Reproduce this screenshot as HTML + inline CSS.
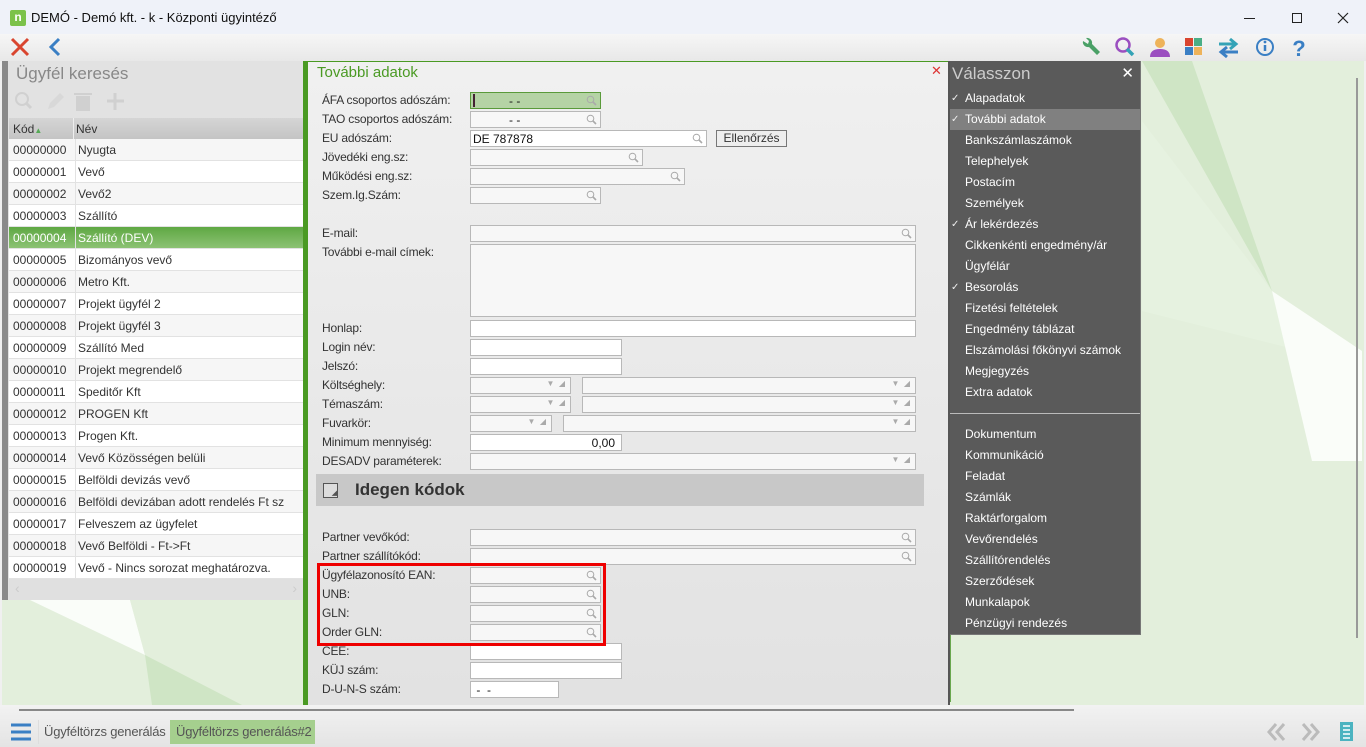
<!DOCTYPE html><html><head><meta charset="utf-8"><style>
*{box-sizing:border-box;margin:0;padding:0}
body{width:1366px;height:747px;overflow:hidden;font-family:"Liberation Sans",sans-serif;font-size:12px;color:#333;background:#f0f0f0;position:relative}
.a{position:absolute}
.lbl{position:absolute;left:322px;font-size:12px;color:#333;letter-spacing:-0.2px}
.in{position:absolute;background:#fff;border:1px solid #b8b8b8;height:17px}
.in.g{background:#f7f7f7}
.mag{position:absolute;right:3px;top:2px;width:11px;height:11px}
.dd{position:absolute;right:5px;top:1px;font-size:8px;color:#aaa}
.menu div{height:21px;line-height:21px;padding-left:15px;color:#fff;font-size:12px;position:relative}
.menu .ck:before{content:"✓";position:absolute;left:1px;font-size:10px;color:#eee}
.row{position:absolute;left:9px;width:294px;height:22px;line-height:22px;border-bottom:1px solid #e2e2e2}
.row span{position:absolute;left:4px}.row b{font-weight:normal;position:absolute;left:66px;border-left:1px solid #e2e2e2;padding-left:2px;height:22px}
</style></head><body>
<div class="a" style="left:0;top:0;width:1366px;height:34px;background:#eff2f9"></div>
<div class="a" style="left:10px;top:10px;width:16px;height:16px;background:#7cc24a;border-radius:2px;color:#fff;font-weight:bold;font-size:12px;line-height:15px;text-align:center">n</div>
<div class="a" style="left:31px;top:10px;font-size:13px;color:#111">DEMÓ - Demó kft. - k - Központi ügyintéző</div>
<div class="a" style="left:1244px;top:18px;width:11px;height:1px;background:#222"></div>
<div class="a" style="left:1292px;top:13px;width:10px;height:10px;border:1px solid #222"></div>
<svg class="a" style="left:1337px;top:12px" width="12" height="12"><path d="M1 1L11 11M11 1L1 11" stroke="#222" stroke-width="1.2"/></svg>
<div class="a" style="left:0;top:34px;width:1366px;height:27px;background:linear-gradient(#f6f6f6,#e8e8e8)"></div>
<svg class="a" style="left:9px;top:37px" width="22" height="20"><path d="M3 2L19 18M19 2L3 18" stroke="#d9452f" stroke-width="3"/></svg>
<svg class="a" style="left:47px;top:37px" width="16" height="20"><path d="M12 2L4 10L12 18" stroke="#3a7fc4" stroke-width="3" fill="none"/></svg>
<svg class="a" style="left:1075px;top:34px" width="240" height="27">
<path d="M8 7a5 5 0 0 0 6 6l8 8l3-3l-8-8a5 5 0 0 0-6-6l3 3l-1 3z" fill="#4aa066"/>
<circle cx="48" cy="11" r="6.5" stroke="#9b4fc0" stroke-width="2.5" fill="none"/><path d="M52 15l6 6" stroke="#34a3b6" stroke-width="3.5"/>
<circle cx="85" cy="9" r="5" fill="#eeb35a"/><path d="M75 23q0-8 10-8t10 8z" fill="#9b4fc0"/>
<rect x="110" y="4" width="8" height="8" fill="#d9452f"/><rect x="119" y="4" width="8" height="8" fill="#4aae86"/><rect x="110" y="13" width="8" height="8" fill="#3a7fc4"/><rect x="119" y="13" width="8" height="8" fill="#eeb35a"/>
<path d="M144 10h16M155 5l6 5l-6 5" stroke="#34a3b6" stroke-width="3" fill="none"/><path d="M163 18h-16M152 13l-6 5l6 5" stroke="#3a7fc4" stroke-width="3" fill="none"/>
<circle cx="190" cy="13" r="8" stroke="#3a7fc4" stroke-width="2" fill="none"/><path d="M190 11v6" stroke="#3a7fc4" stroke-width="2.5"/><circle cx="190" cy="8" r="1.4" fill="#3a7fc4"/>
<text x="224" y="22" font-family="Liberation Sans" font-weight="bold" font-size="22" fill="#3a7fc4" text-anchor="middle">?</text>
</svg>
<div class="a" style="left:2px;top:61px;width:1362px;height:644px;background:#e3efdc;overflow:hidden">
<svg width="1362" height="644"><polygon points="28,539 128,539 143,594" fill="#fafdf9"/><polygon points="128,539 300,539 300,644 240,644 143,594" fill="#e3efdc"/><polygon points="143,594 240,644 150,644" fill="#cfe5c5"/><polygon points="1140,0 1190,0 1270,230" fill="#cfe5c5"/><polygon points="1140,60 1270,230 1300,290 1140,250" fill="#e6f2e0"/><polygon points="1270,230 1360,290 1360,400 1310,400" fill="#fafdf9"/></svg></div>
<div class="a" style="left:1356px;top:78px;width:2px;height:560px;background:#999"></div>
<div class="a" style="left:2px;top:61px;width:6px;height:539px;background:#8a8a8a"></div>
<div class="a" style="left:8px;top:61px;width:295px;height:539px;background:#e2e2e2"></div>
<div class="a" style="left:16px;top:64px;font-size:17px;color:#888">Ügyfél keresés</div>
<svg class="a" style="left:12px;top:90px" width="115" height="22" opacity=".45"><circle cx="10" cy="9" r="6" stroke="#bbb" stroke-width="2" fill="none"/><path d="M14 13l5 5" stroke="#bbb" stroke-width="3"/><path d="M36 19l2-6l10-10l4 4l-10 10z" fill="#ccc"/><rect x="64" y="6" width="14" height="15" fill="#bbb"/><rect x="62" y="3" width="18" height="2" fill="#bbb"/><path d="M103 3v17M95 11h17" stroke="#bbb" stroke-width="3"/></svg>
<div class="a" style="left:9px;top:118px;width:294px;height:21px;background:linear-gradient(#d5d5d5,#c4c4c4)"></div>
<div class="a" style="left:13px;top:122px;font-size:12px;color:#333">Kód<span style="color:#5a5;font-size:8px">▲</span></div>
<div class="a" style="left:73px;top:118px;width:1px;height:21px;background:#eee"></div>
<div class="a" style="left:76px;top:122px">Név</div>
<div id="rows"></div>
<div class="a" style="left:9px;top:579px;width:294px;height:21px;background:#e0e0e0;color:#ccc;font-size:14px"><span style="position:absolute;left:6px;top:1px">‹</span><span style="position:absolute;right:6px;top:1px">›</span></div>
<div class="a" style="left:303px;top:61px;width:5px;height:644px;background:#4a9a23"></div>
<div class="a" style="left:308px;top:61px;width:641px;height:644px;background:linear-gradient(#f0f0f0,#e2e2e2);border-top:1px solid #4a9a23"></div>
<div class="a" style="left:948px;top:61px;width:2px;height:644px;background:#555"></div>
<div class="a" style="left:317px;top:64px;font-size:15px;color:#4a9a23">További adatok</div>
<div class="a" style="left:931px;top:63px;font-size:13px;color:#d33">✕</div>
<div id="form"></div>
<div class="a" style="left:316px;top:474px;width:608px;height:32px;background:#c8c8c8"></div>
<div class="a" style="left:323px;top:483px;width:15px;height:15px;border:1px solid #555;background:#ddd;font-size:7px;color:#555;text-align:right;line-height:19px">◢</div>
<div class="a" style="left:355px;top:480px;font-size:17px;font-weight:bold;color:#333">Idegen kódok</div>
<div class="a" style="left:716px;top:130px;width:71px;height:17px;border:1px solid #777;background:#eee;font-size:12px;text-align:center;line-height:15px">Ellenőrzés</div>
<div class="a" style="left:317px;top:563px;width:289px;height:83px;border:3px solid #e00"></div>
<div class="a" style="left:950px;top:61px;width:1px;height:641px;background:#6aa84f"></div>
<div class="a menu" style="left:950px;top:61px;width:191px;height:574px;background:#5a5a5a;border-right:1px solid #777;border-bottom:1px solid #777">
<div style="height:27px;line-height:25px;font-size:17px;color:#ccc;padding-left:2px">Válasszon<span style="position:absolute;right:6px;top:0;color:#fff;font-size:15px">✕</span></div>
<div class="ck">Alapadatok</div><div class="ck" style="background:#808080">További adatok</div><div>Bankszámlaszámok</div><div>Telephelyek</div><div>Postacím</div><div>Személyek</div><div class="ck">Ár lekérdezés</div><div>Cikkenkénti engedmény/ár</div><div>Ügyfélár</div><div class="ck">Besorolás</div><div>Fizetési feltételek</div><div>Engedmény táblázat</div><div>Elszámolási főkönyvi számok</div><div>Megjegyzés</div><div>Extra adatok</div>
<div style="height:21px;position:relative"><span style="position:absolute;left:0;right:0;top:10px;height:1px;background:#bbb"></span></div>
<div>Dokumentum</div><div>Kommunikáció</div><div>Feladat</div><div>Számlák</div><div>Raktárforgalom</div><div>Vevőrendelés</div><div>Szállítórendelés</div><div>Szerződések</div><div>Munkalapok</div><div>Pénzügyi rendezés</div>
</div>
<div class="a" style="left:0;top:705px;width:1366px;height:42px;background:linear-gradient(#f2f2f2,#e4e4e4)"></div>
<div class="a" style="left:19px;top:709px;width:1055px;height:2px;background:#888"></div>
<svg class="a" style="left:10px;top:722px" width="22" height="20"><path d="M1 3h20M1 10h20M1 17h20" stroke="#3a7fc4" stroke-width="3"/></svg>
<div class="a" style="left:38px;top:720px;width:132px;height:24px;border-left:1px solid #ddd"></div>
<div class="a" style="left:44px;top:724px;font-size:13px;color:#555;letter-spacing:-0.2px">Ügyféltörzs generálás</div>
<div class="a" style="left:170px;top:720px;width:145px;height:24px;background:#a5cf8e"></div>
<div class="a" style="left:176px;top:724px;font-size:13px;color:#555;letter-spacing:-0.2px">Ügyféltörzs generálás#2</div>
<svg class="a" style="left:1266px;top:722px" width="70" height="20"><path d="M10 2L3 10L10 18M18 2L11 10L18 18" stroke="#bbb" stroke-width="3" fill="none"/><path d="M37 2L44 10L37 18M45 2L52 10L45 18" stroke="#bbb" stroke-width="3" fill="none"/></svg>
<svg class="a" style="left:1339px;top:721px" width="16" height="21"><rect x="1" y="1" width="13" height="19" fill="#4bb3c0"/><path d="M4 5h7M4 9h7M4 13h7M4 17h7" stroke="#fff" stroke-width="1.5"/></svg>
<script>
var R=[["00000000","Nyugta"],["00000001","Vevő"],["00000002","Vevő2"],["00000003","Szállító"],["00000004","Szállító (DEV)"],["00000005","Bizományos vevő"],["00000006","Metro Kft."],["00000007","Projekt  ügyfél 2"],["00000008","Projekt  ügyfél 3"],["00000009","Szállító Med"],["00000010","Projekt megrendelő"],["00000011","Speditőr Kft"],["00000012","PROGEN Kft"],["00000013","Progen Kft."],["00000014","Vevő Közösségen belüli"],["00000015","Belföldi devizás vevő"],["00000016","Belföldi devizában adott rendelés Ft sz"],["00000017","Felveszem az ügyfelet"],["00000018","Vevő Belföldi - Ft->Ft"],["00000019","Vevő - Nincs sorozat meghatározva."]];
var h="";R.forEach(function(r,i){var bg=i==4?"linear-gradient(#5fa843,#8cc274)":(i%2?"#fff":"#f6f6f6");var c=i==4?"#fff":"#333";h+='<div class="row" style="top:'+(139+i*22)+'px;background:'+bg+';color:'+c+'"><span>'+r[0]+'</span><b>'+r[1]+'</b></div>'});document.getElementById("rows").innerHTML=h;
var mag='<svg class="mag" viewBox="0 0 11 11"><circle cx="4.5" cy="4.5" r="3.3" stroke="#aaa" fill="none"/><path d="M7 7l3 3" stroke="#aaa" stroke-width="1.6"/></svg>';
var F=[["ÁFA csoportos adószám:",100,131,"m","- -","s"],["TAO csoportos adószám:",119,131,"m","- -"],["EU adószám:",138,237,"m","DE 787878"],["Jövedéki eng.sz:",157,173,"m"],["Működési eng.sz:",176,215,"m"],["Szem.Ig.Szám:",195,131,"m"],["E-mail:",233,446,"m"],["További e-mail címek:",252,446,"t"],["Honlap:",328,446],["Login név:",347,152],["Jelszó:",366,152],["Költséghely:",385,],["Témaszám:",404],["Fuvarkör:",423],["Minimum mennyiség:",442,152,"n","0,00"],["DESADV paraméterek:",461,446,"d"],["Partner vevőkód:",537,446,"m"],["Partner szállítókód:",556,446,"m"],["Ügyfélazonosító EAN:",575,131,"m"],["UNB:",594,131,"m"],["GLN:",613,131,"m"],["Order GLN:",632,131,"m"],["CEE:",651,152],["KÜJ szám:",670,152],["D-U-N-S szám:",689,89,"","&nbsp;-&nbsp;&nbsp;-"]];
var f="";F.forEach(function(r){var y=r[1];f+='<div class="lbl" style="top:'+(y-7)+'px">'+r[0]+'</div>';
var dd='<span class="dd">▼ &nbsp;◢</span>';
if(!r[2]){var w1=r[0]=="Fuvarkör:"?82:101;f+='<div class="in g" style="left:470px;top:'+(y-8)+'px;width:'+w1+'px">'+dd+'</div><div class="in g" style="left:'+(470+w1+11)+'px;top:'+(y-8)+'px;width:'+(446-w1-11)+'px">'+dd+'</div>';return}
var st=r[5]=="s"?"background:#b5d3a5;border-color:#5a9a3a;":"";var hh=r[3]=="t"?73:17;var yy=y-8;
var g=(r[3]=="m"||r[3]=="d"||r[3]=="t")&&!r[5]&&r[0]!="EU adószám:"?" g":"";
var inner=r[3]=="m"?mag:r[3]=="d"?dd:"";var txt=r[4]?'<span style="position:absolute;'+(r[3]=="n"?'right:6px':r[4]=="- -"?'left:38px':'left:2px')+';top:1px;font-size:12px;color:#111">'+r[4]+'</span>':"";
if(r[5]=="s")txt+='<span style="position:absolute;left:2px;top:1px;width:2px;height:13px;background:#423"></span>';
f+='<div class="in'+g+'" style="left:470px;top:'+yy+'px;width:'+r[2]+'px;height:'+hh+'px;'+st+'">'+txt+inner+'</div>'});
document.getElementById("form").innerHTML=f;
</script>
</body></html>
